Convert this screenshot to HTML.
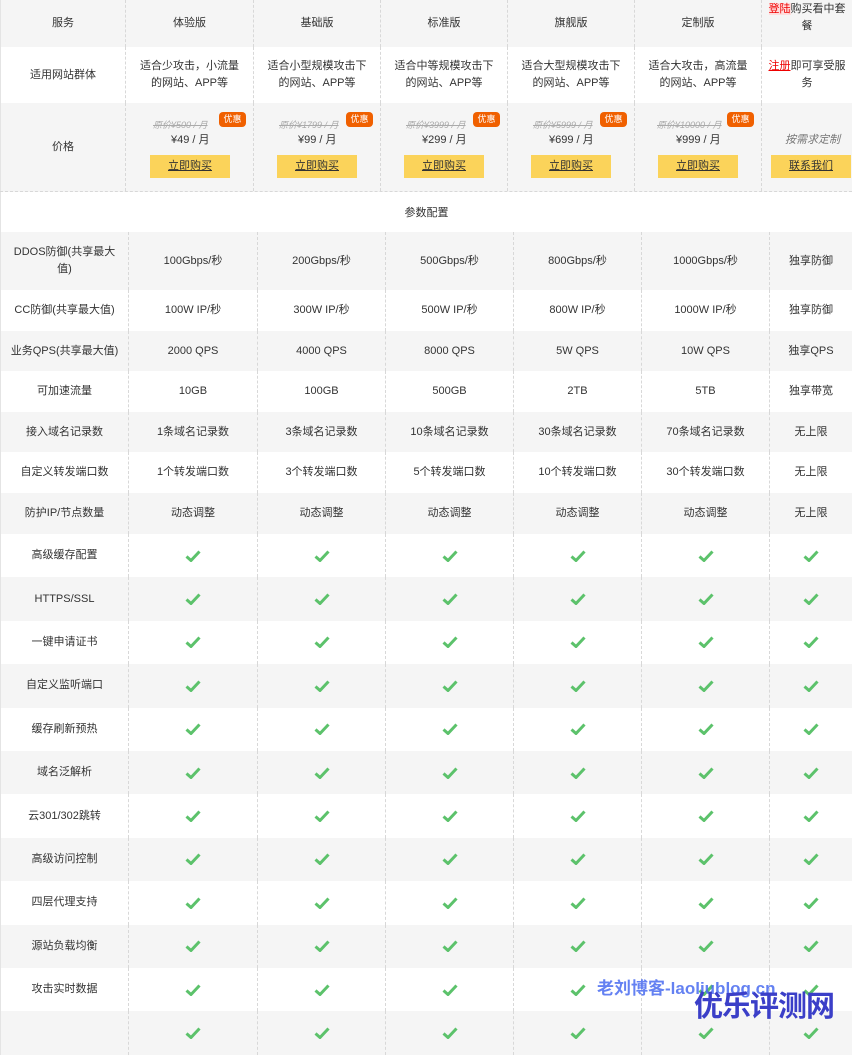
<!DOCTYPE html>
<html><head><meta charset="utf-8">
<style>
*{margin:0;padding:0;box-sizing:border-box}
body{width:852px;height:1024px;overflow:hidden;background:#fff;font-family:"Liberation Sans","Noto Sans CJK SC",sans-serif;font-size:11px;color:#333}
.r{position:absolute;left:0;width:852px}
.g{background:#f5f5f5}
.c{position:absolute;top:0;height:100%;display:flex;align-items:center;justify-content:center;text-align:center;line-height:17px;border-left:1px dashed #d8d8d8}
.c:first-child{border-left:1px solid #e4e4e4}
.ck{width:16px;height:12px}
.btn{position:absolute;width:80px;height:23px;background:#fbd35a;top:52px;text-decoration:underline;color:#333;line-height:23px;font-size:11px}
.old{position:absolute;top:14px;color:#aaa;font-style:italic;text-decoration:line-through;font-size:9px}
.bd{position:absolute;top:9px;width:27px;height:15px;background:#f06000;color:#fff;border-radius:4px;font-size:9px;line-height:15px}
.pr{position:absolute;top:29px;font-size:11px}
.red{color:#e00;text-decoration:underline}
</style></head><body>
<!-- top section -->
<div class="r g" style="top:0;height:47px">
<div class="c" style="left:0;width:125px">服务</div>
<div class="c" style="left:125px;width:128px">体验版</div>
<div class="c" style="left:253px;width:127px">基础版</div>
<div class="c" style="left:380px;width:127px">标准版</div>
<div class="c" style="left:507px;width:127px">旗舰版</div>
<div class="c" style="left:634px;width:127px">定制版</div>
<div class="c" style="left:761px;width:91px;align-items:flex-start;padding-top:1px;line-height:17px"><span><span class="red" style="text-decoration:none;background:#fdd">登陆</span>购买看中套<br>餐</span></div>
</div>
<div class="r" style="top:47px;height:56px">
<div class="c" style="left:0;width:125px">适用网站群体</div>
<div class="c" style="left:125px;width:128px">适合少攻击，小流量<br>的网站、APP等</div>
<div class="c" style="left:253px;width:127px">适合小型规模攻击下<br>的网站、APP等</div>
<div class="c" style="left:380px;width:127px">适合中等规模攻击下<br>的网站、APP等</div>
<div class="c" style="left:507px;width:127px">适合大型规模攻击下<br>的网站、APP等</div>
<div class="c" style="left:634px;width:127px">适合大攻击，高流量<br>的网站、APP等</div>
<div class="c" style="left:761px;width:91px"><span><span class="red">注册</span>即可享受服<br>务</span></div>
</div>
<div class="r g" style="top:103px;height:89px;border-bottom:1px dashed #d8d8d8">
<div class="c" style="left:0;width:125px">价格</div>
<div class="c" style="left:125px;width:128px"><span class="old" style="left:27px">原价¥500 / 月</span><span class="bd" style="left:93px">优惠</span><span class="pr" style="left:45px">¥49 / 月</span><span class="btn" style="left:24px">立即购买</span></div>
<div class="c" style="left:253px;width:127px"><span class="old" style="left:25px">原价¥1799 / 月</span><span class="bd" style="left:92px">优惠</span><span class="pr" style="left:44px">¥99 / 月</span><span class="btn" style="left:23px">立即购买</span></div>
<div class="c" style="left:380px;width:127px"><span class="old" style="left:25px">原价¥3999 / 月</span><span class="bd" style="left:92px">优惠</span><span class="pr" style="left:41px">¥299 / 月</span><span class="btn" style="left:23px">立即购买</span></div>
<div class="c" style="left:507px;width:127px"><span class="old" style="left:25px">原价¥5999 / 月</span><span class="bd" style="left:92px">优惠</span><span class="pr" style="left:41px">¥699 / 月</span><span class="btn" style="left:23px">立即购买</span></div>
<div class="c" style="left:634px;width:127px"><span class="old" style="left:22px">原价¥10000 / 月</span><span class="bd" style="left:92px">优惠</span><span class="pr" style="left:41px">¥999 / 月</span><span class="btn" style="left:23px">立即购买</span></div>
<div class="c" style="left:761px;width:91px"><span class="pr" style="top:29px;left:23px;color:#777;font-style:italic">按需求定制</span><span class="btn" style="left:9px">联系我们</span></div>
</div>
<div class="r" style="top:192px;height:40px;display:flex;align-items:center;justify-content:center;border-left:1px solid #e4e4e4">参数配置</div>
<div id="spec"></div>
<div style="position:absolute;left:597px;top:974px;color:#4a6cf0;font-size:17px;font-weight:bold;opacity:.85">老刘博客-laoliublog.cn</div>
<div style="position:absolute;left:694px;top:983px;color:#3b3fc8;font-size:29px;font-weight:bold;letter-spacing:-1px">优乐评测网</div>
<script>
var L=[0,128,257,385,513,641,769,852];
var rows=[
["DDOS防御(共享最大<br>值)","100Gbps/秒","200Gbps/秒","500Gbps/秒","800Gbps/秒","1000Gbps/秒","独享防御",58],
["CC防御(共享最大值)","100W IP/秒","300W IP/秒","500W IP/秒","800W IP/秒","1000W IP/秒","独享防御",41],
["业务QPS(共享最大值)","2000 QPS","4000 QPS","8000 QPS","5W QPS","10W QPS","独享QPS",40],
["可加速流量","10GB","100GB","500GB","2TB","5TB","独享带宽",41],
["接入域名记录数","1条域名记录数","3条域名记录数","10条域名记录数","30条域名记录数","70条域名记录数","无上限",40],
["自定义转发端口数","1个转发端口数","3个转发端口数","5个转发端口数","10个转发端口数","30个转发端口数","无上限",41],
["防护IP/节点数量","动态调整","动态调整","动态调整","动态调整","动态调整","无上限",41]];
var ck='<svg class="ck" viewBox="0 0 16 12"><path d="M1.5 6.5L6 10.5L14.5 1.5" fill="none" stroke="#5cc26b" stroke-width="3"/></svg>';
["高级缓存配置","HTTPS/SSL","一键申请证书","自定义监听端口","缓存刷新预热","域名泛解析","云301/302跳转","高级访问控制","四层代理支持","源站负载均衡","攻击实时数据",""].forEach(function(n){rows.push([n,ck,ck,ck,ck,ck,ck,43.4])});
var h='',y=232;
rows.forEach(function(r,i){
h+='<div class="r'+(i%2==0?' g':'')+'" style="top:'+y+'px;height:'+r[7]+'px">';
for(var k=0;k<7;k++)h+='<div class="c" style="left:'+L[k]+'px;width:'+(L[k+1]-L[k])+'px">'+r[k]+'</div>';
h+='</div>';y+=r[7];});
document.getElementById('spec').innerHTML=h;
</script>
</body></html>
